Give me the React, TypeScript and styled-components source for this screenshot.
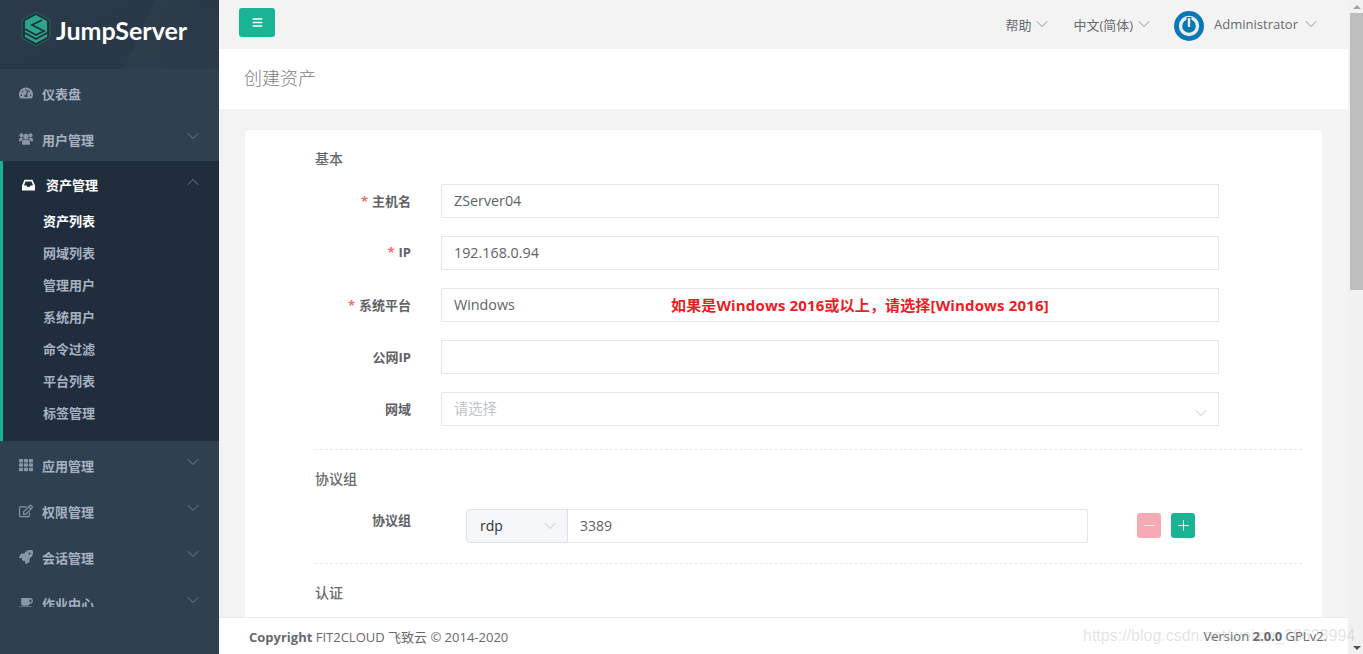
import React from "react";
import styled, { createGlobalStyle } from "styled-components";
import { ChevronDown, ChevronUp, Minus, Plus } from "lucide-react";
import {
  FaBars,
  FaCoffee,
  FaRegEdit,
  FaRocket,
  FaTachometerAlt,
  FaTh,
} from "react-icons/fa";

const GlobalStyle = createGlobalStyle`
  html, body {
    margin: 0;
    height: 100%;
    overflow: hidden;
  }
  body {
    font-family: "Open Sans", "Noto Sans CJK SC", sans-serif;
    font-size: 13px;
    color: #676a6c;
  }
  * {
    box-sizing: border-box;
  }
`;

const Page = styled.div`
  position: relative;
  display: flex;
  width: 100%;
  height: 654px;
  overflow: hidden;
  background: #f3f3f4;
`;

const Sidebar = styled.aside`
  flex: 0 0 219px;
  display: flex;
  flex-direction: column;
  background: #2f4050;
`;

const Brand = styled.div`
  flex: 0 0 69px;
  display: flex;
  align-items: flex-start;
  gap: 5px;
  padding: 11px 0 0 21px;
  background:
    linear-gradient(115deg, transparent 62%, rgba(255, 255, 255, 0.025) 62%, transparent 85%),
    linear-gradient(150deg, #2a3a49 0%, #293846 60%, #2c3c4b 100%);
`;

const BrandName = styled.span`
  font-family: "Lato", sans-serif;
  font-weight: 700;
  font-size: 25px;
  line-height: 38px;
  color: #fff;
`;

const Menu = styled.nav`
  flex: 0 0 538px;
  overflow: hidden;
`;

const MenuItem = styled.div`
  position: relative;
  display: flex;
  align-items: center;
  height: 46px;
  padding-left: 19px;
  padding-top: 2px;
  font-weight: 600;
  font-size: 13px;
  color: #a7b1c2;
  svg.menu-icon {
    flex: 0 0 14px;
    margin-right: 9px;
    width: 14px;
    height: 14px;
    color: #8a95a5;
  }
`;

const ActiveGroup = styled.div`
  height: 280px;
  border-left: 3px solid #1ab394;
  background: #1f2d3d;
`;

const ActiveHead = styled(MenuItem)`
  height: 45px;
  color: #fff;
  svg.menu-icon {
    flex: 0 0 13px;
    width: 13px;
    margin-right: 11px;
    color: #fff;
  }
`;

const SubItem = styled.div<{ $current?: boolean }>`
  height: 32px;
  line-height: 31px;
  padding-left: 40px;
  font-size: 13px;
  font-weight: ${(p) => (p.$current ? 700 : 600)};
  color: ${(p) => (p.$current ? "#fff" : "#a7b1c2")};
`;

const Caret = styled.span`
  position: absolute;
  right: 16px;
  top: 11px;
  display: flex;
  color: #7a8694;
`;

const Main = styled.main`
  flex: 1;
  min-width: 0;
  display: flex;
  flex-direction: column;
`;

const TopBar = styled.header`
  flex: 0 0 49px;
  display: flex;
  align-items: flex-start;
  justify-content: space-between;
  padding: 8px 27px 0 20px;
`;

const MenuToggle = styled.button`
  display: flex;
  align-items: center;
  justify-content: center;
  width: 36px;
  height: 29px;
  padding: 0;
  border: none;
  border-radius: 3px;
  background: #1ab394;
  color: #fff;
`;

const TopLinks = styled.div`
  display: flex;
  align-items: flex-start;
  height: 33px;
`;

const TopLink = styled.span`
  display: flex;
  align-items: center;
  gap: 1px;
  height: 32px;
  margin-left: 21px;
  font-size: 13px;
  color: #676a6c;
  svg {
    color: #85898c;
  }
`;

const UserLink = styled(TopLink)`
  margin-left: 20px;
  svg:first-child {
    margin: 3px 9px 0 0;
  }
  svg:last-child {
    margin-left: 2px;
  }
`;

const Heading = styled.div`
  flex: 0 0 60px;
  display: flex;
  align-items: center;
  padding: 0 0 5px 25px;
  background: #fff;
  font-size: 18px;
  font-weight: 300;
  color: #7d8083;
`;

const Content = styled.div`
  flex: 1;
  min-height: 0;
  overflow: hidden;
  padding: 21px 26px 0;
`;

const Card = styled.section`
  height: 600px;
  padding: 19px 20px 0 70px;
  border-radius: 3px;
  background: #fff;
  box-shadow: 0 0 1px #dfe4ed;
`;

const SectionTitle = styled.h3`
  margin: 0;
  height: 20px;
  line-height: 20px;
  font-size: 14px;
  font-weight: 500;
  color: #676a6c;
`;

const Row = styled.div`
  position: relative;
  display: flex;
  align-items: center;
  height: 34px;
  margin-top: 18px;
  &:first-of-type {
    margin-top: 15px;
  }
`;

const Label = styled.label`
  flex: 0 0 96px;
  margin-top: -2px;
  text-align: right;
  font-size: 13px;
  font-weight: 700;
  color: #606266;
`;

const Required = styled.span`
  margin-right: 4px;
  color: #f56c6c;
`;

const Input = styled.div<{ $placeholder?: boolean }>`
  position: relative;
  width: 778px;
  height: 34px;
  margin-left: 30px;
  padding-left: 12px;
  line-height: 32px;
  font-size: 14.3px;
  border: 1px solid #e5e6e7;
  color: ${(p) => (p.$placeholder ? "#c0c4cc" : "#606266")};
  svg {
    position: absolute;
    right: 7px;
    top: 10px;
    color: #b9bdc5;
  }
`;

const Hint = styled.span`
  position: absolute;
  left: 229px;
  top: 6px;
  font-size: 15px;
  line-height: 20px;
  font-weight: 700;
  letter-spacing: 0.15px;
  white-space: nowrap;
  color: #ed1c24;
`;

const Divider = styled.div<{ $tight?: boolean }>`
  margin: ${(p) => (p.$tight ? "20px" : "23px")} 0 19px;
  border-top: 1px dashed #e7eaec;
`;

const ProtocolRow = styled.div`
  display: flex;
  align-items: flex-start;
  height: 34px;
  margin-top: 20px;
`;

const ProtocolLabel = styled(Label)`
  margin-top: 0;
  line-height: 22px;
`;

const ProtocolSelect = styled.div`
  display: flex;
  align-items: center;
  justify-content: space-between;
  width: 102px;
  height: 34px;
  margin-left: 55px;
  padding: 0 7px 1px 13px;
  border: 1px solid #dcdfe6;
  border-radius: 4px 0 0 4px;
  background: #f5f7fa;
  font-size: 14px;
  color: #303133;
  svg {
    color: #b9bdc5;
  }
`;

const ProtocolPort = styled.div`
  width: 521px;
  height: 34px;
  margin-left: -1px;
  padding-left: 13px;
  line-height: 32px;
  font-size: 14px;
  border: 1px solid #e5e6e7;
  border-left: none;
  border-radius: 0 2px 2px 0;
  color: #606266;
`;

const IconButton = styled.button<{ $muted?: boolean }>`
  display: flex;
  align-items: center;
  justify-content: center;
  width: 24px;
  height: 25px;
  margin: 4px 0 0 ${(p) => (p.$muted ? "49px" : "10px")};
  padding: 0;
  border: none;
  border-radius: 3px;
  background: ${(p) => (p.$muted ? "#f8aab4" : "#1ab394")};
  color: #fff;
`;

const Footer = styled.footer`
  flex: 0 0 37px;
  display: flex;
  align-items: center;
  justify-content: space-between;
  padding: 0 21px 0 30px;
  background: #fff;
  border-top: 1px solid #e7eaec;
  font-size: 13px;
  color: #676a6c;
  b {
    font-weight: 700;
  }
`;

const Scrollbar = styled.div`
  flex: 0 0 15px;
  display: flex;
  flex-direction: column;
  align-items: flex-end;
  background: #f1f1f1;
`;

const ScrollArrow = styled.div<{ $down?: boolean }>`
  flex: 0 0 13px;
  width: 13px;
  display: flex;
  align-items: center;
  justify-content: center;
  &::before {
    content: "";
    border-left: 4px solid transparent;
    border-right: 4px solid transparent;
    ${(p) =>
      p.$down ? "border-top: 4px solid #505050;" : "border-bottom: 4px solid #a3a3a3;"}
  }
`;

const ScrollThumb = styled.div`
  width: 13px;
  height: 277px;
  background: #bdbdbd;
`;

const ScrollGap = styled.div`
  flex: 1;
`;

const Watermark = styled.span`
  position: absolute;
  left: 1083px;
  top: 626px;
  font-family: "Liberation Sans", sans-serif;
  font-size: 16px;
  line-height: 20px;
  color: rgba(150, 150, 150, 0.27);
  white-space: nowrap;
`;

// hexagon badge with a stacked "S" inside
function Logo() {
  return (
    <svg width="30" height="36" viewBox="0 0 30 36">
      <path d="M15 1 L29 9 V27 L15 35 L1 27 V9 Z" fill="#22303d" stroke="#1c6a66" strokeWidth="1" />
      <path d="M15 4 L26 10 V26 L15 32 L4 26 V10 Z" fill="#2aa58a" />
      <g fill="none" stroke="#22303d" strokeWidth="1.7">
        <path d="M21 9 L11 14 L23 20 L15 24 L4 18" />
        <path d="M4 22 L15 28 L26 22" />
      </g>
    </svg>
  );
}

function Avatar() {
  return (
    <svg width="30" height="30" viewBox="0 0 30 30">
      <circle cx="15" cy="15" r="15" fill="#0b78b6" />
      <circle cx="15" cy="15" r="8.5" fill="none" stroke="#e8eef2" strokeWidth="3.4" />
      <path d="M15 6 V15" stroke="#0b78b6" strokeWidth="5" />
      <path d="M15 7 V16" stroke="#e8eef2" strokeWidth="2.4" />
    </svg>
  );
}

function UsersIcon() {
  return (
    <svg className="menu-icon" viewBox="0 0 16 15" fill="currentColor">
      <circle cx="8" cy="4.5" r="3" />
      <circle cx="2.8" cy="3.2" r="2.2" />
      <circle cx="13.2" cy="3.2" r="2.2" />
      <path d="M3.5 14 V10.5 Q3.5 8 6 8 H10 Q12.5 8 12.5 10.5 V14 Z" />
      <path d="M0 10 V8 Q0 6 2 6 H4.4 Q4.6 7.2 5.2 7.6 Q2.8 8 2.8 10 Z" />
      <path d="M16 10 V8 Q16 6 14 6 H11.6 Q11.4 7.2 10.8 7.6 Q13.2 8 13.2 10 Z" />
    </svg>
  );
}

function InboxIcon() {
  return (
    <svg className="menu-icon" viewBox="0 0 13 13">
      <path d="M2.5 1.2 H10.5 L13 7 V12 H0 V7 Z" fill="currentColor" />
      <path d="M3.5 3 H9.5 L11 7 H8.5 L7.5 8.6 H5.5 L4.5 7 H2 Z" fill="#1f2d3d" />
    </svg>
  );
}

const subMenu = ["网域列表", "管理用户", "系统用户", "命令过滤", "平台列表", "标签管理"];

const Down = () => <ChevronDown size={20} strokeWidth={1.1} />;

function App() {
  return (
    <Page>
      <GlobalStyle />
      <Sidebar>
        <Brand>
          <Logo />
          <BrandName>JumpServer</BrandName>
        </Brand>
        <Menu>
          <MenuItem>
            <FaTachometerAlt className="menu-icon" />
            仪表盘
          </MenuItem>
          <MenuItem>
            <UsersIcon />
            用户管理
            <Caret>
              <Down />
            </Caret>
          </MenuItem>
          <ActiveGroup>
            <ActiveHead>
              <InboxIcon />
              资产管理
              <Caret>
                <ChevronUp size={20} strokeWidth={1.1} />
              </Caret>
            </ActiveHead>
            <SubItem $current>资产列表</SubItem>
            {subMenu.map((name) => (
              <SubItem key={name}>{name}</SubItem>
            ))}
          </ActiveGroup>
          <MenuItem>
            <FaTh className="menu-icon" />
            应用管理
            <Caret>
              <Down />
            </Caret>
          </MenuItem>
          <MenuItem>
            <FaRegEdit className="menu-icon" />
            权限管理
            <Caret>
              <Down />
            </Caret>
          </MenuItem>
          <MenuItem>
            <FaRocket className="menu-icon" />
            会话管理
            <Caret>
              <Down />
            </Caret>
          </MenuItem>
          <MenuItem>
            <FaCoffee className="menu-icon" />
            作业中心
            <Caret>
              <Down />
            </Caret>
          </MenuItem>
        </Menu>
      </Sidebar>
      <Main>
        <TopBar>
          <MenuToggle>
            <FaBars size={11} />
          </MenuToggle>
          <TopLinks>
            <TopLink>
              帮助 <Down />
            </TopLink>
            <TopLink>
              中文(简体) <Down />
            </TopLink>
            <UserLink>
              <Avatar />
              Administrator <Down />
            </UserLink>
          </TopLinks>
        </TopBar>
        <Heading>创建资产</Heading>
        <Content>
          <Card>
            <SectionTitle>基本</SectionTitle>
            <Row>
              <Label>
                <Required>*</Required>主机名
              </Label>
              <Input>ZServer04</Input>
            </Row>
            <Row>
              <Label>
                <Required>*</Required>IP
              </Label>
              <Input>192.168.0.94</Input>
            </Row>
            <Row>
              <Label>
                <Required>*</Required>系统平台
              </Label>
              <Input>
                Windows
                <Hint>如果是Windows 2016或以上，请选择[Windows 2016]</Hint>
              </Input>
            </Row>
            <Row>
              <Label>公网IP</Label>
              <Input />
            </Row>
            <Row>
              <Label>网域</Label>
              <Input $placeholder>
                请选择
                <ChevronDown size={20} strokeWidth={1.1} />
              </Input>
            </Row>
            <Divider />
            <SectionTitle>协议组</SectionTitle>
            <ProtocolRow>
              <ProtocolLabel>协议组</ProtocolLabel>
              <ProtocolSelect>
                rdp
                <ChevronDown size={20} strokeWidth={1.1} />
              </ProtocolSelect>
              <ProtocolPort>3389</ProtocolPort>
              <IconButton $muted>
                <Minus size={17} strokeWidth={1.2} />
              </IconButton>
              <IconButton>
                <Plus size={17} strokeWidth={1.2} />
              </IconButton>
            </ProtocolRow>
            <Divider $tight />
            <SectionTitle>认证</SectionTitle>
          </Card>
        </Content>
        <Footer>
          <span>
            <b>Copyright</b> FIT2CLOUD 飞致云 © 2014-2020
          </span>
          <span>
            Version <b>2.0.0</b> GPLv2.
          </span>
        </Footer>
      </Main>
      <Scrollbar>
        <ScrollArrow />
        <ScrollThumb />
        <ScrollGap />
        <ScrollArrow $down />
      </Scrollbar>
      <Watermark>https://blog.csdn.net/weixin_38623994</Watermark>
    </Page>
  );
}

export default App;
